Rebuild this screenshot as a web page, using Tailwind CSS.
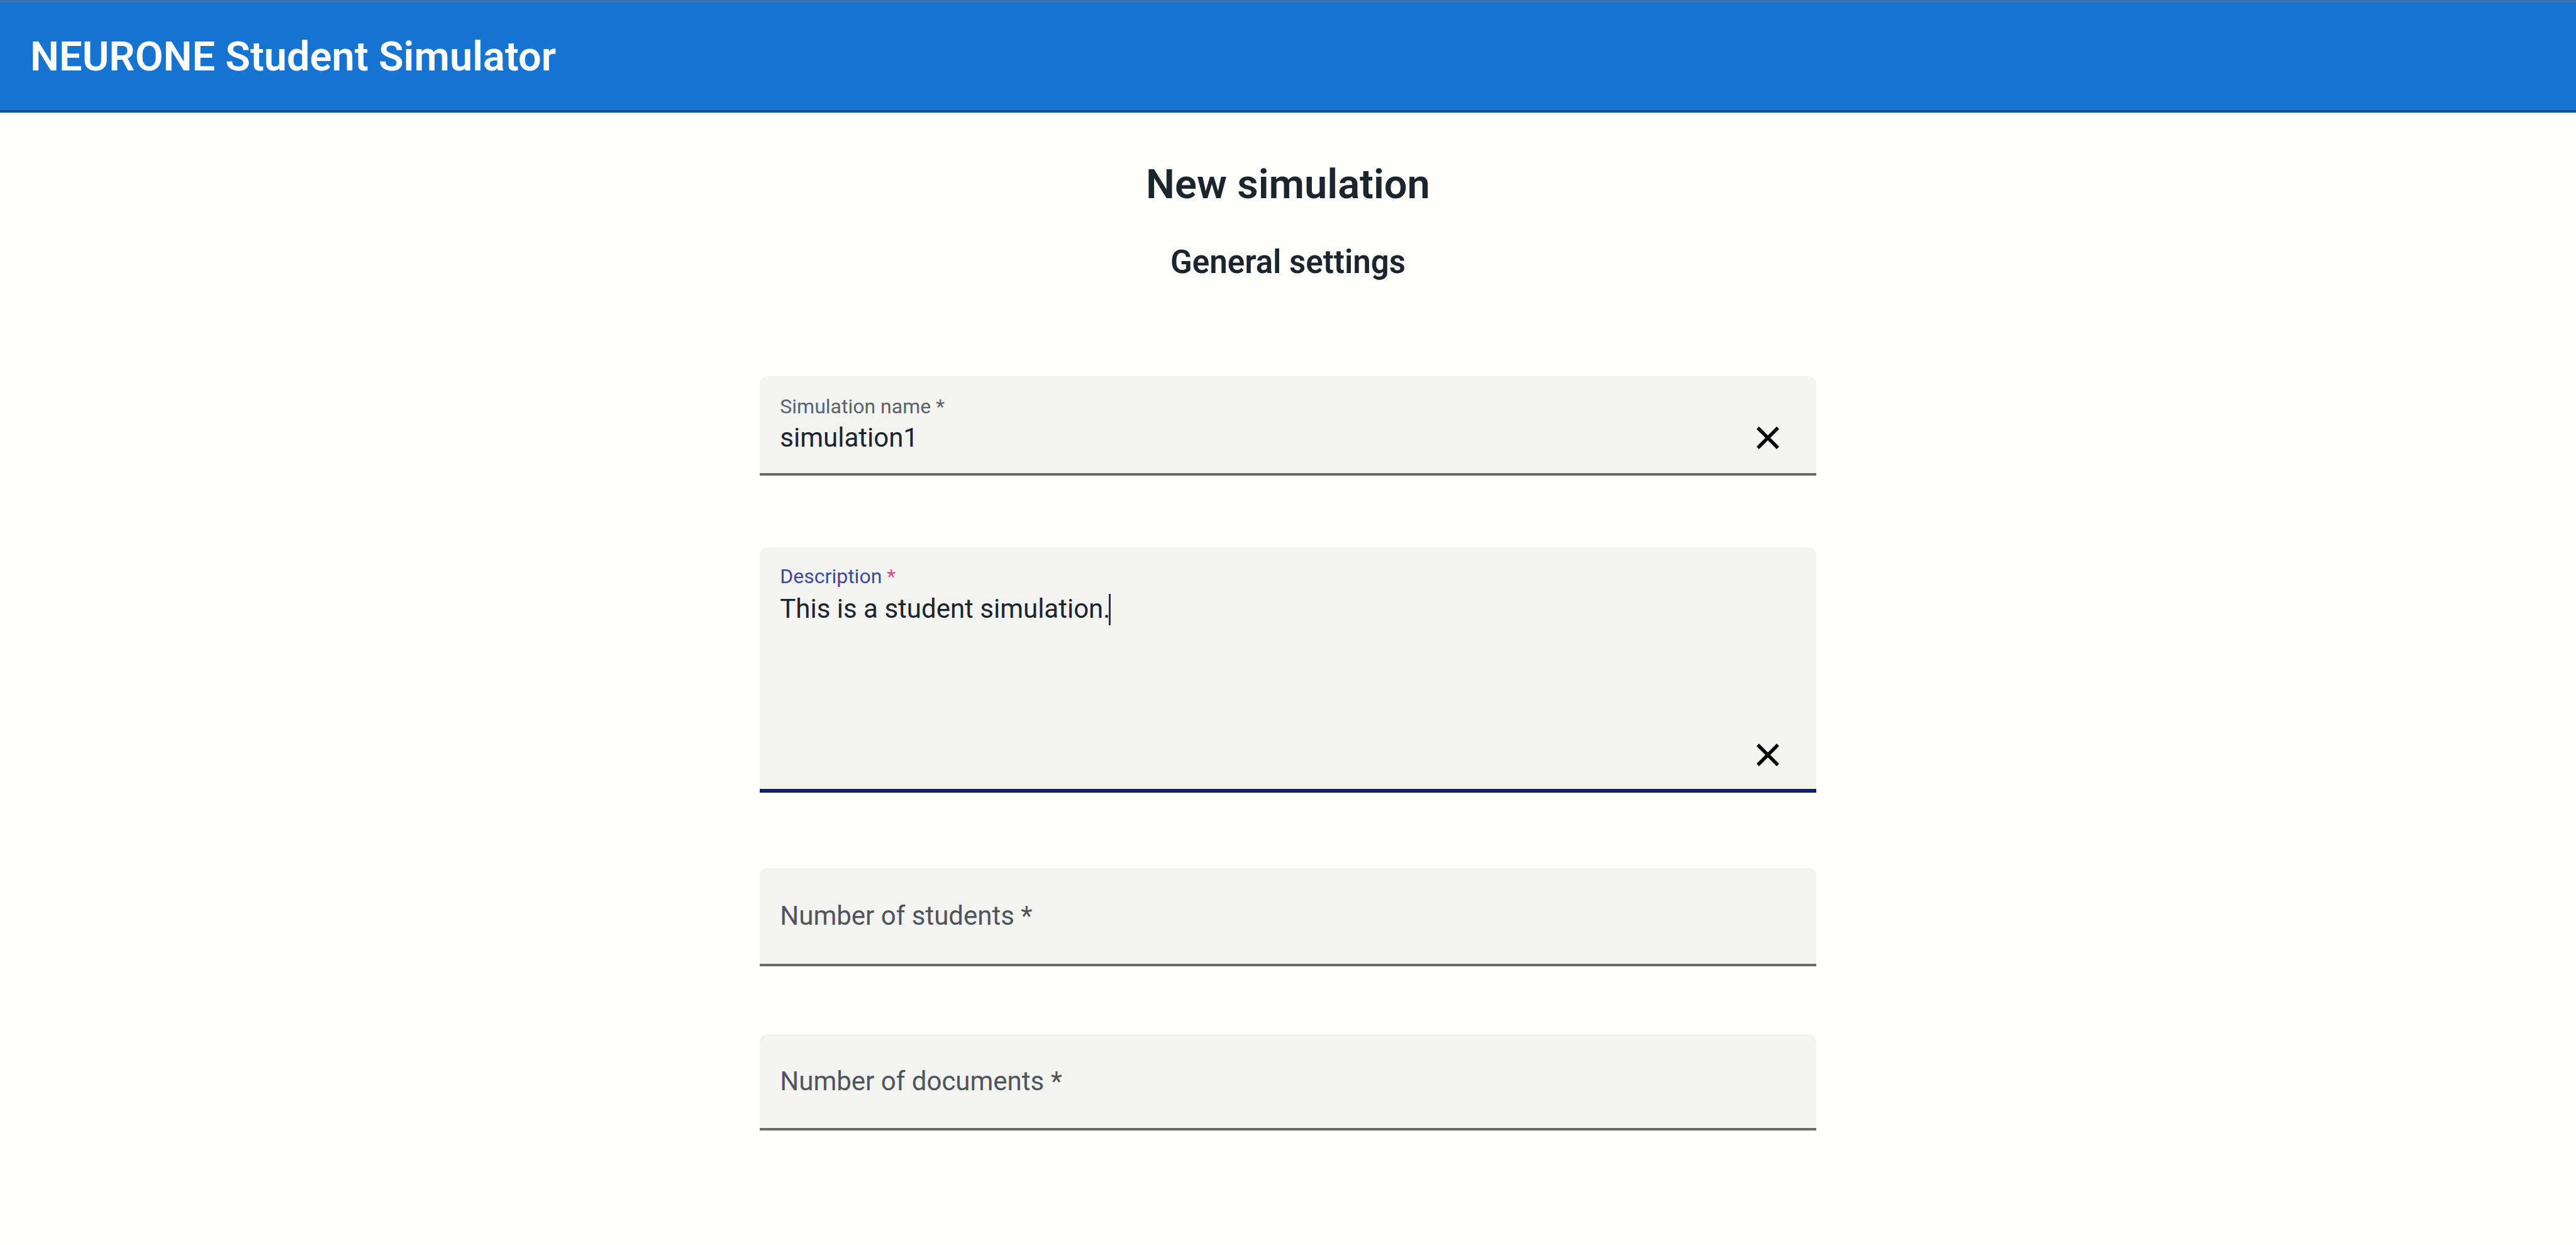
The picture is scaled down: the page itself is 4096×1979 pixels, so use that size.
<!DOCTYPE html>
<html lang="en">
<head>
<meta charset="utf-8">
<meta name="viewport" content="width=device-width, initial-scale=1">
<title>NEURONE Student Simulator</title>
<script src="https://cdn.jsdelivr.net/npm/@tailwindcss/browser@4"></script>
</head>
<body class="min-h-screen bg-[#fefefd] font-['Roboto',sans-serif] text-[#1c242c]">
  <header class="flex h-[179px] items-center border-y-4 border-t-[#3c71ad] border-b-[#0d5199] bg-[#1773d0] px-12">
    <span class="text-[65px] leading-[72px] font-semibold text-white">NEURONE Student Simulator</span>
  </header>

  <main class="flex flex-col items-center">
    <h1 class="mt-[76px] text-[65px] leading-[76px] font-semibold">New simulation</h1>
    <h2 class="mt-[56px] text-[51px] leading-[60px] font-semibold">General settings</h2>

    <form class="mt-[151px] flex w-[41%] flex-col">
      <div class="flex h-[158px] items-end rounded-t-xl border-b-4 border-[#686a68] bg-[#f3f3f2] px-8">
        <div class="flex h-full flex-1 flex-col pt-[28px]">
          <label for="name" class="text-[32px] leading-[40px] text-[#5c6268]">Simulation name *</label>
          <input id="name" type="text" value="simulation1" class="h-[60px] w-full bg-transparent text-[42px] leading-[60px] outline-none">
        </div>
        <button type="button" aria-label="Clear simulation name" class="mr-4 mb-[28px] flex size-[56px] items-center justify-center text-black">
          <svg class="size-[56px]" viewBox="0 0 56 56" fill="none" stroke="currentColor" stroke-width="5.5"><path d="M11 12 43 44M43 12 11 44"/></svg>
        </button>
      </div>

      <div class="mt-[114px] flex h-[390px] items-end rounded-t-xl border-b-6 border-[#12206a] bg-[#f3f3f2] px-8">
        <div class="flex h-full flex-1 flex-col pt-[26px]">
          <label for="description" class="text-[32px] leading-[40px] text-[#3f4a9c]">Description <span class="text-[#e8468c]">*</span></label>
          <div class="relative">
            <textarea id="description" class="block h-[280px] w-full resize-none bg-transparent text-[42px] leading-[64px] outline-none">This is a student simulation.</textarea>
            <span class="absolute top-2 left-[523px] h-[50px] w-[3px] bg-[#30343a]"></span>
          </div>
        </div>
        <button type="button" aria-label="Clear description" class="mr-4 mb-[26px] flex size-[56px] items-center justify-center text-black">
          <svg class="size-[56px]" viewBox="0 0 56 56" fill="none" stroke="currentColor" stroke-width="5.5"><path d="M11 12 43 44M43 12 11 44"/></svg>
        </button>
      </div>

      <div class="mt-[120px] grid h-[156px] items-center rounded-t-xl border-b-4 border-[#686a68] bg-[#f3f3f2] px-8">
        <label for="students" class="col-start-1 row-start-1 text-[42px] leading-[56px] text-[#4f555b]">Number of students *</label>
        <input id="students" type="text" inputmode="numeric" class="col-start-1 row-start-1 h-full w-full bg-transparent text-[42px] outline-none">
      </div>

      <div class="mt-[108px] grid h-[153px] items-center rounded-t-xl border-b-4 border-[#686a68] bg-[#f3f3f2] px-8">
        <label for="documents" class="col-start-1 row-start-1 text-[42px] leading-[56px] text-[#4f555b]">Number of documents *</label>
        <input id="documents" type="text" inputmode="numeric" class="col-start-1 row-start-1 h-full w-full bg-transparent text-[42px] outline-none">
      </div>
    </form>
  </main>
</body>
</html>
